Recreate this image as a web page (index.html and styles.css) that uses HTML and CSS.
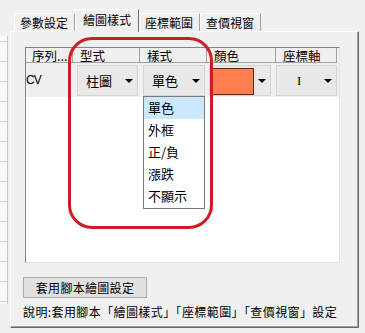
FILE: index.html
```html
<!DOCTYPE html>
<html lang="zh-Hant">
<head>
    <meta charset="utf-8">
    <title>繪圖樣式</title>
    <link rel="stylesheet" href="styles.css">
</head>
<body>
    <div class="window">
        <div class="side"></div>
        <div class="main">
            <div class="tabs">
                <div class="tab">參數設定</div>
                <div class="tab active">繪圖樣式</div>
                <div class="tab">座標範圍</div>
                <div class="tab">查價視窗</div>
            </div>
            <div class="panel">
                <div class="grid">
                    <div class="row head">
                        <div class="cell c1">序列...</div>
                        <div class="cell c2">型式</div>
                        <div class="cell c3">樣式</div>
                        <div class="cell c4">顏色</div>
                        <div class="cell c5">座標軸</div>
                    </div>
                    <div class="row data">
                        <div class="cell c1"><span class="series">CV</span></div>
                        <div class="cell c2">
                            <div class="combo"><span>柱圖</span><i class="arrow"></i></div>
                        </div>
                        <div class="cell c3">
                            <div class="combo"><span>單色</span><i class="arrow"></i></div>
                        </div>
                        <div class="cell c4">
                            <div class="combo color"><span class="swatch"></span><i class="arrow"></i></div>
                        </div>
                        <div class="cell c5">
                            <div class="combo axis"><span>I</span><i class="arrow"></i></div>
                        </div>
                    </div>
                    <ul class="dropdown">
                        <li class="selected">單色</li>
                        <li>外框</li>
                        <li>正/負</li>
                        <li>漲跌</li>
                        <li>不顯示</li>
                    </ul>
                    <div class="mark"></div>
                </div>
                <button class="apply">套用腳本繪圖設定</button>
                <p class="note">說明:套用腳本「繪圖樣式」「座標範圍」「查價視窗」設定</p>
            </div>
        </div>
    </div>
</body>
</html>
```

FILE: styles.css
```css
body {
    margin: 0;
    padding: 0;
    background-color: #f0f0f0;
    color: #000;
    font-family: "Noto Sans CJK TC", "Liberation Sans", sans-serif;
    font-size: 12px;
}

.window {
    display: flex;
    height: 333px;
    overflow: hidden;
}

.side {
    width: 7px;
    height: 268px;
    margin-top: 36px;
    border-right: 1px solid #c8c8c8;
    background-color: #fafafa;
    background-image: repeating-linear-gradient(to bottom, transparent 0, transparent 5px, #d0d0d0 5px, #d0d0d0 6px, transparent 6px, transparent 20px);
}

.main {
    margin-left: 2px;
    width: 349px;
}

/* tabs */

.tabs {
    display: flex;
    align-items: flex-end;
    height: 31px;
    padding-left: 4px;
}

.tab {
    height: 18px;
    line-height: 18px;
    padding: 0 6px 0 5px;
    border-top: 1px solid #fff;
    border-left: 1px solid #fff;
    border-right: 1px solid #a0a0a0;
    box-sizing: border-box;
    white-space: nowrap;
}

.tab.active {
    position: relative;
    z-index: 1;
    height: 23px;
    line-height: 20px;
    margin-bottom: -1px;
    padding: 0 7px 0 7px;
    background-color: #f0f0f0;
    border-right: 1px solid #696969;
}

/* panel */

.panel {
    height: 297px;
    box-sizing: border-box;
    border-top: 1px solid #fff;
    border-left: 1px solid #fff;
    border-right: 1px solid #696969;
    border-bottom: 1px solid #696969;
    box-shadow: inset -1px -1px 0 #a0a0a0;
    padding: 15px 0 0 14px;
}

.grid {
    position: relative;
    width: 315px;
    height: 216px;
    box-sizing: border-box;
    border-top: 1px solid #828282;
    border-left: 1px solid #828282;
    border-right: 1px solid #e3e3e3;
    border-bottom: 1px solid #e3e3e3;
    background-color: #fff;
}

.row {
    display: flex;
    background-color: #f0f0f0;
}

.head .cell {
    height: 15px;
    line-height: 15px;
    box-sizing: border-box;
    border-right: 1px solid #a0a0a0;
    border-bottom: 1px solid #a0a0a0;
    padding-left: 7px;
    font-size: 12.5px;
}

.head .c1 {
    padding-left: 6px;
}

.c1 { width: 47px; }
.c2 { width: 67px; }
.c3 { width: 67px; }
.c4 { width: 69px; }
.c5 { width: 61px; }

.data {
    height: 34px;
}

.data .cell {
    box-sizing: border-box;
    padding-top: 2px;
}

.series {
    display: block;
    line-height: 30px;
    font-family: "Liberation Sans", sans-serif;
    font-size: 12px;
    letter-spacing: -1px;
}

.data .c2 { padding-left: 4px; }
.data .c3 { padding-left: 3px; }
.data .c4 { padding-left: 2px; }
.data .c5 { padding-left: 0; }

.combo {
    display: flex;
    align-items: center;
    justify-content: space-between;
    width: 61px;
    height: 31px;
    box-sizing: border-box;
    padding: 0 4px 0 8px;
    background-color: #e9e9e9;
    border: 1px solid #d4d4d4;
    font-size: 13px;
}

.c3 .combo {
    width: 62px;
}

.c4 .combo {
    width: 62px;
    padding: 1px 4px 0 0;
}

.swatch {
    width: 44px;
    height: 27px;
    box-sizing: border-box;
    background-color: #ff7f50;
    border: 1px solid #5a2a18;
}

.axis {
    padding-left: 20px;
}

.axis span {
    font-family: "Liberation Serif", serif;
    font-size: 13px;
}

.arrow {
    width: 0;
    height: 0;
    border-left: 4px solid transparent;
    border-right: 4px solid transparent;
    border-top: 4px solid #000;
}

/* open list of the style combo */

.dropdown {
    position: absolute;
    left: 117px;
    top: 48px;
    z-index: 2;
    width: 62px;
    height: 113px;
    box-sizing: border-box;
    margin: 0;
    padding: 0;
    list-style: none;
    background-color: #fff;
    border: 1px solid #7a7a7a;
}

.dropdown li {
    height: 22px;
    line-height: 22px;
    padding-left: 4px;
    font-size: 13px;
}

.dropdown .selected {
    background-color: #cce8ff;
}

/* red highlight drawn over the screenshot */

.mark {
    position: absolute;
    left: 42px;
    top: -11px;
    z-index: 3;
    width: 145px;
    height: 192px;
    box-sizing: border-box;
    border: 3px solid #d11c22;
    border-radius: 24px;
}

/* bottom */

.apply {
    display: block;
    width: 124px;
    height: 21px;
    margin: 14px 0 0 -2px;
    padding: 0;
    background-color: #e1e1e1;
    border: 1px solid #adadad;
    font-family: "Noto Sans CJK TC", sans-serif;
    font-size: 12px;
    letter-spacing: 0.3px;
    line-height: 18px;
    color: #000;
}

.note {
    margin: 6px 0 0 -2px;
    line-height: 16px;
    font-size: 12px;
    letter-spacing: 0.4px;
    white-space: nowrap;
}
```
